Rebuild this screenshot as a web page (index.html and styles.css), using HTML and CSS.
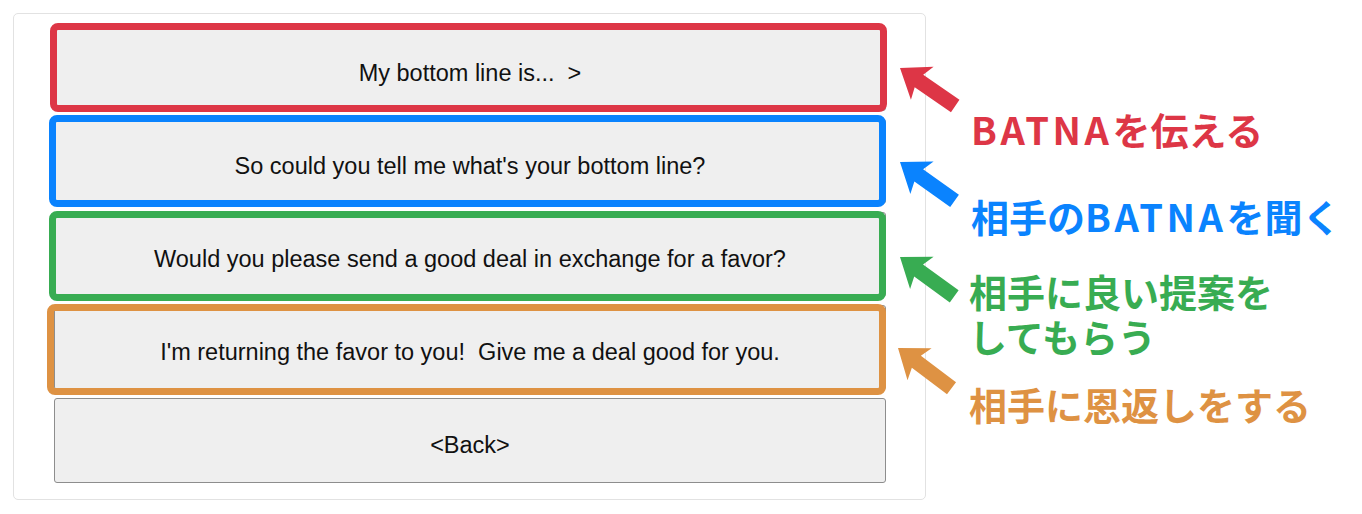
FILE: index.html
```html
<!DOCTYPE html>
<html lang="ja">
<head>
<meta charset="utf-8">
<title>Negotiation choices</title>
<link rel="stylesheet" href="styles.css">
</head>
<body>
<div class="stage">
  <div class="panel">
    <button class="choice mark mark-red">My bottom line is...&nbsp; &gt;</button>
    <button class="choice mark mark-blue">So could you tell me what's your bottom line?</button>
    <button class="choice mark mark-green">Would you please send a good deal in exchange for a favor?</button>
    <button class="choice mark mark-orange">I'm returning the favor to you!&nbsp; Give me a deal good for you.</button>
    <button class="choice">&lt;Back&gt;</button>
  </div>

  <div class="notes">
    <svg class="arrows" width="1362" height="514" viewBox="0 0 1362 514" aria-hidden="true">
      <polygon class="arrow-red" points="0,0 27,-20 23,-7.5 67,-7.5 67,7.5 23,7.5 27,20" transform="translate(900 68) rotate(34.5)"/>
      <polygon class="arrow-blue" points="0,0 27,-20 23,-7.5 67,-7.5 67,7.5 23,7.5 27,20" transform="translate(900 162) rotate(35.5)"/>
      <polygon class="arrow-green" points="0,0 27,-20 23,-7.5 67,-7.5 67,7.5 23,7.5 27,20" transform="translate(900 257) rotate(36)"/>
      <polygon class="arrow-orange" points="0,0 27,-20 23,-7.5 67,-7.5 67,7.5 23,7.5 27,20" transform="translate(898 348) rotate(37)"/>
    </svg>
    <div class="label label-red"><span class="latin">BATNA</span>を伝える</div>
    <div class="label label-blue">相手の<span class="latin">BATNA</span>を聞く</div>
    <div class="label label-green">相手に良い提案を<br>してもらう</div>
    <div class="label label-orange">相手に恩返しをする</div>
  </div>
</div>
</body>
</html>
```

FILE: styles.css
```css
html, body {
  margin: 0;
  padding: 0;
  background: #ffffff;
}

.stage {
  position: relative;
  width: 1362px;
  height: 514px;
  overflow: hidden;
}

.panel {
  position: relative;
  margin: 13px 0 0 13px;
  width: 832px;
  padding: 12px 39px 16px 40px;
  border: 1px solid #e2e2e2;
  border-radius: 5px;
  display: flex;
  flex-direction: column;
  gap: 8px;
}

.choice {
  position: relative;
  display: block;
  width: 832px;
  height: 85px;
  margin: 0;
  padding: 9px 0 0 0;
  background: #efefef;
  border: 1px solid #8d8d8d;
  border-radius: 3px;
  font-family: "Liberation Sans", Arial, sans-serif;
  font-size: 23.5px;
  line-height: 27px;
  color: #111111;
  text-align: center;
}

.mark::after {
  content: "";
  position: absolute;
  border: 7px solid currentColor;
  border-radius: 8px;
  pointer-events: none;
}

.mark-red::after {
  top: -4px; left: -5px; right: -2px; bottom: -2px;
  border-color: #dd3646;
}
.mark-blue::after {
  top: -5px; left: -6px; right: -1px; bottom: -4px;
  border-color: #0a83fe;
}
.mark-green::after {
  top: -2px; left: -6px; right: -1px; bottom: -5px;
  border-color: #38ac52;
}
.mark-orange::after {
  top: -2px; left: -8px; right: -1px; bottom: -6px;
  border-color: #de9243;
}

.notes {
  position: absolute;
  inset: 0;
  pointer-events: none;
}

.arrows {
  position: absolute;
  left: 0;
  top: 0;
}

.arrow-red { fill: #dd3646; }
.arrow-blue { fill: #0a83fe; }
.arrow-green { fill: #38ac52; }
.arrow-orange { fill: #de9243; }

.label {
  position: absolute;
  font-family: "Noto Sans CJK JP", "Noto Sans", sans-serif;
  font-weight: 700;
  font-size: 38px;
  line-height: 45px;
  white-space: nowrap;
}

.latin {
  letter-spacing: 3.5px;
}

.label-red { left: 971px; top: 106px; color: #dd3646; }
.label-blue { left: 971px; top: 193px; color: #0a83fe; }
.label-green { left: 969px; top: 268px; color: #38ac52; }
.label-orange { left: 969px; top: 381px; color: #de9243; }
```
